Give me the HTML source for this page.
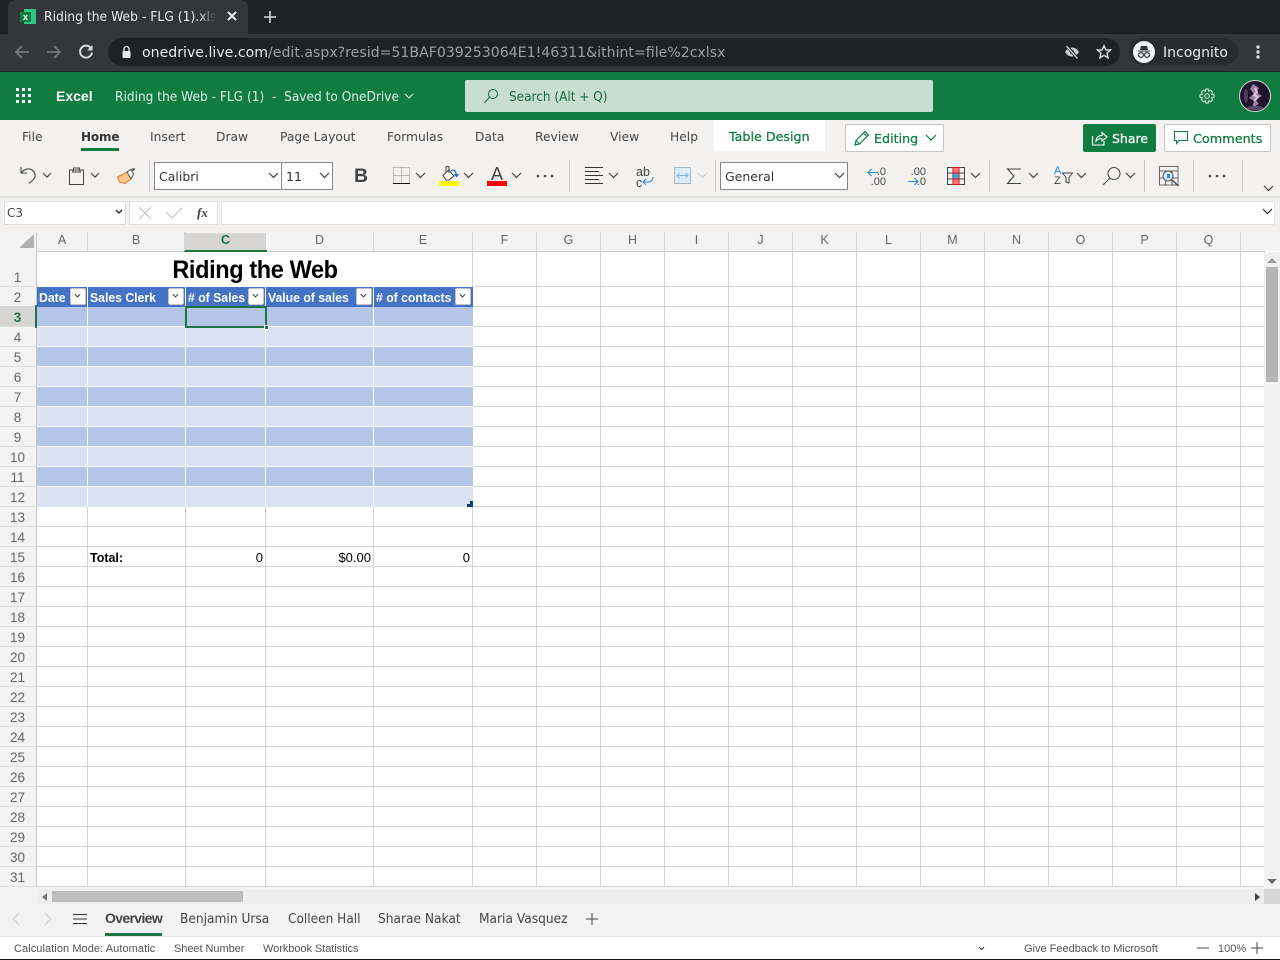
<!DOCTYPE html>
<html><head><meta charset="utf-8"><title>Riding the Web</title>
<style>
html,body{margin:0;padding:0;width:1280px;height:960px;overflow:hidden;background:#fff}
body{position:relative;font-family:"DejaVu Sans","Liberation Sans",sans-serif;font-size:13px;color:#444}
.a,.t,.c,.r,.n,svg{position:absolute}
.a{display:block}
.t{white-space:nowrap;line-height:20px}
.rb{font-size:12.3px;color:#444;top:127px}
.c{top:232px;height:19px;line-height:17px;text-align:center;color:#666;font-size:12.500px;font-family:"Liberation Sans",sans-serif;border-right:1px solid #d4d4d4;box-sizing:border-box}
.r{left:-1px;width:37px;height:20px;line-height:22px;text-align:center;color:#666;font-size:13.500px;padding-top:0;box-sizing:border-box;font-family:"Liberation Sans",sans-serif}
.h{position:absolute;top:289px;color:#fff;font:bold 13px/18px "Liberation Sans",sans-serif;white-space:nowrap;transform-origin:0 50%;transform:scaleX(.94)}
.f{position:absolute;top:288px;width:16px;height:17px;background:#fff;border:1px solid #c4c4c4;box-sizing:border-box;border-radius:2px}
.f:after{content:"";position:absolute;left:4px;top:3px;width:4px;height:4px;border-right:1.5px solid #222;border-bottom:1.5px solid #222;transform:rotate(45deg) scale(.85)}
.ch{fill:none;stroke:#444;stroke-width:1.2}
.v{position:absolute;width:1px;background:#d4d4d4}
.w{position:absolute;width:1px;background:#fff}
.s{-webkit-text-stroke:.25px currentColor}
</style></head><body>
<!-- browser chrome -->
<div class="a" style="left:0;top:0;width:1280px;height:34px;background:#202124"></div>
<div class="a" style="left:8px;top:0;width:240px;height:34px;background:#35363a;border-radius:8px 8px 0 0"></div>
<div class="a" style="left:0;top:34px;width:1280px;height:37px;background:#35363a"></div>
<div class="a" style="left:0;top:71px;width:1280px;height:1px;background:#202124"></div>
<div class="a" style="left:24px;top:9px;width:12px;height:15px;background:#33c481"></div>
<div class="a" style="left:20px;top:12px;width:11px;height:10px;background:#107c41;color:#fff;font:bold 9px/10px 'Liberation Sans',sans-serif;text-align:center">x</div>
<div class="t" style="left:44px;top:7px;width:172px;overflow:hidden;font-size:13px;color:#e8eaed;line-height:21px;-webkit-mask-image:linear-gradient(to right,#000 155px,transparent 172px);mask-image:linear-gradient(to right,#000 155px,transparent 172px)"><span style="display:inline-block;transform-origin:0 50%;transform:scaleX(.95)">Riding the Web - FLG (1).xlsx</span></div>
<svg style="left:226px;top:10px" width="12" height="12"><path d="M2 2L10 10M10 2L2 10" stroke="#e8eaed" stroke-width="2"/></svg>
<svg style="left:263px;top:10px" width="14" height="14"><path d="M7 1V13M1 7H13" stroke="#dadce0" stroke-width="1.6"/></svg>
<svg style="left:13px;top:43px" width="18" height="18"><path d="M16 9H3M9 3L3 9L9 15" fill="none" stroke="#74777b" stroke-width="1.8"/></svg>
<svg style="left:45px;top:43px" width="18" height="18"><path d="M2 9H15M9 3L15 9L9 15" fill="none" stroke="#74777b" stroke-width="1.8"/></svg>
<svg style="left:77px;top:43px" width="18" height="18"><path d="M14 5.2A6 6 0 1 0 15 9.500" fill="none" stroke="#dadce0" stroke-width="1.9"/><path d="M15.500 2V7.500H10Z" fill="#dadce0"/></svg>
<div class="a" style="left:108px;top:38px;width:1012px;height:28px;background:#202124;border-radius:14px"></div>
<svg style="left:121px;top:45px" width="12" height="14"><rect x="1.500" y="6" width="8" height="7" rx="1" fill="#e8eaed"/><path d="M3 6V4a2.500 2.500 0 0 1 5 0V6" fill="none" stroke="#e8eaed" stroke-width="1.300"/></svg>
<div class="t" style="left:142px;top:43px;font-size:14.400px;color:#9aa0a6;font-family:'DejaVu Sans',sans-serif;transform-origin:0 50%;transform:scaleX(.981)"><span style="color:#e8eaed">onedrive.live.com</span>/edit.aspx?resid=51BAF039253064E1!46311&amp;ithint=file%2cxlsx</div>
<svg style="left:1064px;top:44px" width="16" height="16"><path d="M1 8C3 4.500 5.500 3.500 8 3.500S13 4.500 15 8C13 11.500 10.500 12.500 8 12.500S3 11.500 1 8Z" fill="#c4c7c9"/><circle cx="8" cy="8" r="2" fill="#202124"/><path d="M3 2L13 14" stroke="#202124" stroke-width="3"/><path d="M2.500 2L13.500 14.500" stroke="#c4c7c9" stroke-width="1.400"/></svg>
<svg style="left:1096px;top:44px" width="16" height="16"><path d="M8 1.700L9.900 6H14.500L11 9.100L12.100 13.800L8 11.300L3.900 13.800L5 9.100L1.500 6H6.100Z" fill="none" stroke="#dadce0" stroke-width="1.400"/></svg>
<div class="a" style="left:1129px;top:38px;width:109px;height:27px;background:#2a2b2f;border-radius:14px"></div>
<div class="a" style="left:1133px;top:41px;width:22px;height:22px;background:#f1f3f4;border-radius:50%"></div>
<svg style="left:1135px;top:43px" width="18" height="18"><path d="M6 3H12L13 7H5ZM3 7.500H15V8.500H3Z" fill="#303134"/><circle cx="6" cy="12" r="2.400" fill="none" stroke="#303134" stroke-width="1.200"/><circle cx="12" cy="12" r="2.400" fill="none" stroke="#303134" stroke-width="1.200"/></svg>
<div class="t" style="left:1163px;top:43px;font-size:14px;color:#e8eaed;line-height:21px">Incognito</div>
<svg style="left:1256px;top:45px" width="4" height="15"><circle cx="2" cy="2" r="1.700" fill="#dadce0"/><circle cx="2" cy="7" r="1.700" fill="#dadce0"/><circle cx="2" cy="12" r="1.700" fill="#dadce0"/></svg>
<!-- green bar -->
<div class="a" style="left:0;top:72px;width:1280px;height:48px;background:#107c41"></div>
<svg style="left:16px;top:88px" width="16" height="16" fill="#fff"><rect width="3" height="3" x="0"/><rect width="3" height="3" x="6"/><rect width="3" height="3" x="12"/><rect width="3" height="3" y="6"/><rect width="3" height="3" x="6" y="6"/><rect width="3" height="3" x="12" y="6"/><rect width="3" height="3" y="12"/><rect width="3" height="3" x="6" y="12"/><rect width="3" height="3" x="12" y="12"/></svg>
<div class="t" style="left:56px;top:86px;font-size:14px;font-weight:bold;color:#fff;font-family:'Liberation Sans',sans-serif">Excel</div>
<div class="t" style="left:115px;top:87px;font-size:13px;line-height:21px;color:#dfeee6;transform-origin:0 50%;transform:scaleX(.937)">Riding the Web - FLG (1)&nbsp; -&nbsp; Saved to OneDrive</div>
<svg style="left:404px;top:93px" width="10" height="7"><path d="M1 1L5 5L9 1" fill="none" stroke="#dfeee6"/></svg>
<div class="a" style="left:465px;top:80px;width:468px;height:32px;background:#c7ded0;border-radius:2px"></div>
<svg style="left:483px;top:88px" width="16" height="16"><circle cx="10" cy="6" r="4.500" fill="none" stroke="#1d6a40" stroke-width="1"/><path d="M6.500 9L1.500 15" stroke="#1d6a40" stroke-width="1"/></svg>
<div class="t" style="left:509px;top:87px;font-size:13px;line-height:21px;color:#1b6a3f;transform-origin:0 50%;transform:scaleX(.93)">Search (Alt + Q)</div>
<svg style="left:1199px;top:88px" width="16" height="16"><circle cx="8" cy="8" r="2.300" fill="none" stroke="#e6f1ea"/><path d="M6.800 1H9.200L9.700 3.200L11.600 2.200L13.600 4.200L12.600 6.100L15 6.800V9.200L12.600 9.900L13.600 11.800L11.600 13.800L9.700 12.800L9.200 15H6.800L6.300 12.800L4.400 13.800L2.400 11.800L3.400 9.900L1 9.200V6.800L3.400 6.100L2.400 4.200L4.400 2.200L6.300 3.200Z" fill="none" stroke="#e6f1ea"/></svg>
<svg style="left:1239px;top:80px" width="32" height="32"><circle cx="16" cy="16" r="15.500" fill="#21132c" stroke="#d8d8d8"/><path d="M14 4L20 8L17 12L23 16L16 19L20 24L13 28L15 21L10 18L15 14L11 9Z" fill="#9d7fab"/><path d="M16 8L18 12L15 15L19 17L15 21" fill="none" stroke="#d9c6de" stroke-width="2"/><ellipse cx="7" cy="16" rx="2" ry="7" fill="#4c3f5c"/><ellipse cx="16" cy="28" rx="8" ry="2" fill="#5c4a60"/></svg>
<!-- ribbon -->
<div class="a" style="left:0;top:120px;width:1280px;height:76px;background:#f3f2f1"></div>
<div class="a" style="left:714px;top:120px;width:111px;height:31px;background:#fff"></div>
<div class="t rb" style="left:22px">File</div>
<div class="t rb" style="left:81px;font-weight:bold;color:#333;font-size:12px;letter-spacing:-.15px">Home</div>
<div class="a" style="left:81px;top:148px;width:38px;height:3px;background:#107c41"></div>
<div class="t rb" style="left:150px">Insert</div>
<div class="t rb" style="left:216px">Draw</div>
<div class="t rb" style="left:280px">Page Layout</div>
<div class="t rb" style="left:387px">Formulas</div>
<div class="t rb" style="left:475px">Data</div>
<div class="t rb" style="left:535px">Review</div>
<div class="t rb" style="left:610px">View</div>
<div class="t rb" style="left:670px">Help</div>
<div class="t rb s" style="left:729px;color:#107c41;font-size:12.700px">Table Design</div>
<!-- editing / share / comments -->
<div class="a" style="left:845px;top:124px;width:99px;height:28px;background:#fff;border:1px solid #c8c6c4;box-sizing:border-box;border-radius:2px"></div>
<svg style="left:853px;top:130px" width="18" height="17"><path d="M2 15L3 10.500L12 1.500L15.500 5L6.500 14ZM3 10.500L6.500 14M10.500 3L14 6.500" fill="none" stroke="#107c41" stroke-width="1.200"/></svg>
<div class="t s" style="left:874px;top:128px;line-height:21px;font-size:12.700px;color:#107c41">Editing</div>
<svg style="left:925px;top:134px" width="12" height="8"><path d="M1 1L6 6L11 1" fill="none" stroke="#107c41" stroke-width="1.200"/></svg>
<div class="a" style="left:1083px;top:124px;width:73px;height:28px;background:#107c41;border-radius:2px"></div>
<svg style="left:1091px;top:130px" width="18" height="16"><path d="M1.500 6V15H13V11M5 11C5.500 7 8 5.500 11 5.500V2.500L16 7L11 11V8.500C8.500 8.500 6.500 9 5 11Z" fill="none" stroke="#fff" stroke-width="1.100"/></svg>
<div class="t s" style="left:1112px;top:128px;line-height:21px;font-size:12.500px;color:#fff">Share</div>
<div class="a" style="left:1164px;top:124px;width:107px;height:28px;background:#fff;border:1px solid #c8c6c4;box-sizing:border-box;border-radius:2px"></div>
<svg style="left:1173px;top:130px" width="16" height="15"><path d="M1.500 1.500H14.500V10.500H6L3.500 13.500V10.500H1.500Z" fill="none" stroke="#107c41" stroke-width="1.100"/></svg>
<div class="t s" style="left:1193px;top:129px;line-height:21px;font-size:12.800px;color:#107c41">Comments</div>
<!-- toolbar -->
<svg style="left:19px;top:166px" width="20" height="20"><path d="M2 1V7H8M2 7C6 2.500 10 2 13 4C17 7 17 11 14 14L10 17.500" fill="none" stroke="#444" stroke-width="1.100"/></svg>
<svg class="ch" style="left:42px;top:172px" width="10" height="7"><path d="M1 1L5 5L9 1"/></svg>
<svg style="left:69px;top:167px" width="16" height="19"><path d="M.5 3H14.500V17.500H.5Z M4.500 3V1H10.500V3L11.500 5H3.500Z" fill="#f3f2f1" stroke="#444" stroke-width="1"/></svg>
<svg class="ch" style="left:90px;top:172px" width="10" height="7"><path d="M1 1L5 5L9 1"/></svg>
<svg style="left:117px;top:168px" width="19" height="17"><path d="M.5 9L10 4L14 11L8 15.500L2.500 14Z" fill="#fbc98e" stroke="#e8791e"/><path d="M10 4L14 1.500L16.500 6L14 11Z" fill="#fff" stroke="#555"/><path d="M14.500 2.500L17.500 .5" stroke="#555" stroke-width="2"/></svg>
<div class="a" style="left:149px;top:160px;width:1px;height:32px;background:#c8c6c4"></div>
<div class="a" style="left:154px;top:162px;width:128px;height:28px;background:#fff;border:1px solid #8a8886;box-sizing:border-box"></div>
<div class="a" style="left:281px;top:162px;width:52px;height:28px;background:#fff;border:1px solid #8a8886;box-sizing:border-box"></div>
<div class="t" style="left:159px;top:166px;font-size:12.500px;line-height:21px;color:#333">Calibri</div>
<div class="t" style="left:286px;top:166px;font-size:12.500px;line-height:21px;color:#333">11</div>
<svg class="ch" style="left:268px;top:172px" width="11" height="7"><path d="M1 1L5.500 5.500L10 1"/></svg>
<svg class="ch" style="left:319px;top:172px" width="11" height="7"><path d="M1 1L5.500 5.500L10 1"/></svg>
<div class="t" style="left:354px;top:166px;font:bold 19.500px/20px 'Liberation Sans',sans-serif;color:#444">B</div>
<svg style="left:393px;top:167px" width="17" height="17"><path d="M.5 .5H16.500M.5 .5V16M16.500 .5V16M.5 8.500H16.500M8.500 .5V16" fill="none" stroke="#888" stroke-dasharray="1 1"/><path d="M0 16.500H17" stroke="#111" stroke-width="1"/></svg>
<svg class="ch" style="left:415px;top:172px" width="11" height="7"><path d="M1 1L5.500 5.500L10 1"/></svg>
<svg style="left:440px;top:165px" width="20" height="20"><path d="M3 10.500L8.500 5L14 11L9 15H6Z" fill="#fff" stroke="#444"/><path d="M6 7V2.500C6 1 9 1 9 2.500V8" fill="none" stroke="#444"/><path d="M11 6C14 3.500 16 6 16.500 11M14.500 9L16.500 11.500L18.500 9" fill="none" stroke="#1b6fc2" stroke-width="1.300"/></svg>
<div class="a" style="left:439px;top:181px;width:20px;height:5px;background:#ff0"></div>
<svg class="ch" style="left:463px;top:172px" width="11" height="7"><path d="M1 1L5.500 5.500L10 1"/></svg>
<div class="t" style="left:491px;top:164px;font-size:18px;color:#444;font-family:'Liberation Sans',sans-serif">A</div>
<div class="a" style="left:487px;top:181px;width:20px;height:5px;background:#f00"></div>
<svg class="ch" style="left:511px;top:172px" width="11" height="7"><path d="M1 1L5.500 5.500L10 1"/></svg>
<svg style="left:535px;top:173px" width="20" height="6" fill="#444"><circle cx="3" cy="3" r="1.300"/><circle cx="10" cy="3" r="1.300"/><circle cx="17" cy="3" r="1.300"/></svg>
<div class="a" style="left:569px;top:160px;width:1px;height:32px;background:#c8c6c4"></div>
<svg style="left:585px;top:167px" width="18" height="18"><path d="M0 .5H18M0 4.500H14M0 8.500H18M0 12.500H14M0 16.500H18" stroke="#333" stroke-width="1"/></svg>
<svg class="ch" style="left:608px;top:172px" width="11" height="7"><path d="M1 1L5.500 5.500L10 1"/></svg>
<div class="t" style="left:636px;top:167px;font:12.500px/11px 'Liberation Sans',sans-serif;color:#444">ab<br>c</div>
<svg style="left:642px;top:176px" width="12" height="10"><path d="M11 1C11 4 9 6 6 6H1M4 3L1 6L4 9" fill="none" stroke="#2b88d8" stroke-width="1.100"/></svg>
<svg style="left:674px;top:167px" width="18" height="18"><rect x=".5" y=".5" width="16" height="16" fill="#deecf9" stroke="#a6b8c6"/><path d="M3 8.500H14M5.500 6L3 8.500L5.500 11M11.500 6L14 8.500L11.500 11" fill="none" stroke="#7fb3dc" stroke-width="1"/></svg>
<svg class="ch" style="left:697px;top:172px;stroke:#d0d0d0" width="11" height="7"><path d="M1 1L5.500 5.500L10 1"/></svg>
<div class="a" style="left:715px;top:160px;width:1px;height:32px;background:#c8c6c4"></div>
<div class="a" style="left:720px;top:162px;width:128px;height:28px;background:#fff;border:1px solid #8a8886;box-sizing:border-box"></div>
<div class="t" style="left:725px;top:166px;font-size:12.500px;line-height:21px;color:#333">General</div>
<svg class="ch" style="left:834px;top:172px" width="11" height="7"><path d="M1 1L5.500 5.500L10 1"/></svg>
<div class="t" style="left:868px;top:167px;font:11px/10px 'Liberation Sans',sans-serif;color:#444;text-align:right;width:18px">.0<br>.00</div>
<svg style="left:867px;top:168px" width="12" height="9"><path d="M11 4.500H1M4.500 1L1 4.500L4.500 8" fill="none" stroke="#2b88d8" stroke-width="1.100"/></svg>
<div class="t" style="left:908px;top:167px;font:11px/10px 'Liberation Sans',sans-serif;color:#444;text-align:right;width:18px">.00<br>.0</div>
<svg style="left:907px;top:177px" width="12" height="9"><path d="M1 4.500H11M7.500 1L11 4.500L7.500 8" fill="none" stroke="#2b88d8" stroke-width="1.100"/></svg>
<svg style="left:947px;top:167px" width="18" height="18"><rect x="6" y="1" width="6" height="5" fill="#f4797c"/><rect x="6" y="6" width="6" height="6" fill="#50a5e0"/><rect x="6" y="12" width="6" height="5" fill="#f4797c"/><path d="M.5 .5H17.500V17.500H.5ZM.5 6H17.500M.5 12H17.500M6 .5V17.500M12 .5V17.500" fill="none" stroke="#444"/><path d="M6 .5H12V6H6ZM6 12H12V17.500H6Z" fill="none" stroke="#e01010"/></svg>
<svg class="ch" style="left:970px;top:172px" width="11" height="7"><path d="M1 1L5.500 5.500L10 1"/></svg>
<div class="a" style="left:989px;top:160px;width:1px;height:32px;background:#c8c6c4"></div>
<svg style="left:1006px;top:167px" width="16" height="18"><path d="M15 2H1.500L8 9L1.500 16.500H15" fill="none" stroke="#444" stroke-width="1.100"/></svg>
<svg class="ch" style="left:1028px;top:172px" width="11" height="7"><path d="M1 1L5.500 5.500L10 1"/></svg>
<div class="t" style="left:1054px;top:166px;font:11px/10px 'Liberation Sans',sans-serif;color:#2b88d8">A<br><span style="color:#444">Z</span></div>
<svg style="left:1062px;top:172px" width="11" height="13"><path d="M.5 1H10.500L7 5.500V11L4 10V5.500Z" fill="none" stroke="#444"/></svg>
<svg class="ch" style="left:1076px;top:172px" width="11" height="7"><path d="M1 1L5.500 5.500L10 1"/></svg>
<svg style="left:1102px;top:166px" width="20" height="20"><circle cx="12" cy="7.500" r="6" fill="none" stroke="#444"/><path d="M8 12L1 19" stroke="#444"/></svg>
<svg class="ch" style="left:1125px;top:172px" width="11" height="7"><path d="M1 1L5.500 5.500L10 1"/></svg>
<div class="a" style="left:1144px;top:160px;width:1px;height:32px;background:#c8c6c4"></div>
<svg style="left:1159px;top:166px" width="21" height="21"><path d="M.5 .5H19V19H.5ZM.5 5H19M.5 12H19M6.500 5V19M13 5V19" fill="none" stroke="#666"/><circle cx="9" cy="10" r="5" fill="#dce6ee" stroke="#555"/><rect x="8" y="8" width="3" height="4" fill="#2b88d8"/><path d="M13 14L19.500 20" stroke="#444" stroke-width="1.300"/></svg>
<div class="a" style="left:1193px;top:160px;width:1px;height:32px;background:#c8c6c4"></div>
<svg style="left:1207px;top:173px" width="20" height="6" fill="#444"><circle cx="3" cy="3" r="1.300"/><circle cx="10" cy="3" r="1.300"/><circle cx="17" cy="3" r="1.300"/></svg>
<div class="a" style="left:1242px;top:160px;width:1px;height:32px;background:#c8c6c4"></div>
<svg class="ch" style="left:1263px;top:185px" width="11" height="7"><path d="M1 1L5.500 5.500L10 1"/></svg>
<!-- formula bar -->
<div class="a" style="left:0;top:196px;width:1280px;height:36px;background:#f3f2f1;box-shadow:inset 0 3px 3px -2px #ccc"></div>
<div class="a" style="left:4px;top:201px;width:122px;height:24px;background:#fff;border:1px solid #e1dfdd;box-sizing:border-box"></div>
<div class="t" style="left:7px;top:203px;font-size:12px;color:#444">C3</div>
<svg class="ch" style="left:115px;top:209px;stroke-width:1.500;stroke:#333" width="9" height="6"><path d="M1 1L4 4L7 1"/></svg>
<div class="a" style="left:129px;top:201px;width:89px;height:24px;background:#fff;border:1px solid #e1dfdd;box-sizing:border-box"></div>
<svg style="left:138px;top:206px" width="14" height="14"><path d="M1 1L13 13M13 1L1 13" stroke="#c0bebc"/></svg>
<svg style="left:165px;top:206px" width="18" height="14"><path d="M1 6L7 12L17 2" fill="none" stroke="#c0bebc"/></svg>
<div class="t" style="left:197px;top:203px;font:italic bold 13px/20px 'Liberation Serif',serif;color:#444">fx</div>
<div class="a" style="left:221px;top:201px;width:1054px;height:24px;background:#fff;border:1px solid #e8e6e4;box-sizing:border-box"></div>
<svg class="ch" style="left:1262px;top:208px;stroke:#333" width="11" height="7"><path d="M1 1L5.500 5.500L10 1"/></svg>
<!-- headers -->
<div class="a" style="left:0;top:232px;width:1280px;height:19px;background:#f3f3f3"></div>
<div class="a" style="left:0;top:287px;width:37px;height:600px;background:repeating-linear-gradient(to bottom,#f3f3f3 0,#f3f3f3 19px,#dedede 19px,#dedede 20px)"></div>
<div class="a" style="left:0;top:251px;width:37px;height:36px;background:#f3f3f3;border-bottom:1px solid #dedede;box-sizing:border-box"></div>
<div class="a" style="left:36px;top:233px;width:1px;height:654px;background:#c8c8c8"></div>
<div class="a" style="left:37px;top:251px;width:1228px;height:1px;background:#c8c8c8"></div>
<svg style="left:18px;top:234px" width="17" height="15"><path d="M16 0V14H1Z" fill="#b1b1b1"/></svg>
<div class="a" style="left:185px;top:233px;width:81px;height:18px;background:#d6d5d3"></div>
<div class="a" style="left:184px;top:250px;width:83px;height:2px;background:#217346"></div>
<div class="c" style="left:37px;width:51px">A</div>
<div class="c" style="left:88px;width:97px">B</div>
<div class="c" style="left:185px;width:81px;color:#217346;font-weight:bold;border:0">C</div>
<div class="c" style="left:266px;width:108px">D</div>
<div class="c" style="left:374px;width:99px">E</div>
<div class="c" style="left:473px;width:64px">F</div>
<div class="c" style="left:537px;width:64px">G</div>
<div class="c" style="left:601px;width:64px">H</div>
<div class="c" style="left:665px;width:64px">I</div>
<div class="c" style="left:729px;width:64px">J</div>
<div class="c" style="left:793px;width:64px">K</div>
<div class="c" style="left:857px;width:64px">L</div>
<div class="c" style="left:921px;width:64px">M</div>
<div class="c" style="left:985px;width:64px">N</div>
<div class="c" style="left:1049px;width:64px">O</div>
<div class="c" style="left:1113px;width:64px">P</div>
<div class="c" style="left:1177px;width:64px">Q</div>
<!-- grid -->
<div class="a" style="left:37px;top:287px;width:1228px;height:600px;background:repeating-linear-gradient(to bottom,#fff 0,#fff 19px,#d4d4d4 19px,#d4d4d4 20px)"></div>
<div class="a" style="left:37px;top:252px;width:1228px;height:34px;background:#fff"></div>
<div class="a" style="left:473px;top:286px;width:792px;height:1px;background:#d4d4d4"></div>
<div class="v" style="left:87px;top:507px;height:380px"></div>
<div class="v" style="left:185px;top:507px;height:380px"></div>
<div class="v" style="left:265px;top:507px;height:380px"></div>
<div class="v" style="left:373px;top:507px;height:380px"></div>
<div class="v" style="left:472px;top:252px;height:635px"></div>
<div class="v" style="left:536px;top:252px;height:635px"></div>
<div class="v" style="left:600px;top:252px;height:635px"></div>
<div class="v" style="left:664px;top:252px;height:635px"></div>
<div class="v" style="left:728px;top:252px;height:635px"></div>
<div class="v" style="left:792px;top:252px;height:635px"></div>
<div class="v" style="left:856px;top:252px;height:635px"></div>
<div class="v" style="left:920px;top:252px;height:635px"></div>
<div class="v" style="left:984px;top:252px;height:635px"></div>
<div class="v" style="left:1048px;top:252px;height:635px"></div>
<div class="v" style="left:1112px;top:252px;height:635px"></div>
<div class="v" style="left:1176px;top:252px;height:635px"></div>
<div class="v" style="left:1240px;top:252px;height:635px"></div>
<!-- table -->
<div class="a" style="left:37px;top:287px;width:436px;height:20px;background:#4472c4"></div>
<div class="a" style="left:37px;top:307px;width:436px;height:200px;background:repeating-linear-gradient(to bottom,#b4c6e7 0,#b4c6e7 19px,#fff 19px,#fff 20px,#d9e1f2 20px,#d9e1f2 39px,#fff 39px,#fff 40px)"></div>
<div class="a" style="left:37px;top:506px;width:436px;height:1px;background:#d9e1f2"></div>
<div class="w" style="left:87px;top:287px;height:220px"></div>
<div class="w" style="left:185px;top:287px;height:220px"></div>
<div class="w" style="left:265px;top:287px;height:220px"></div>
<div class="w" style="left:373px;top:287px;height:220px"></div>
<div class="a" style="left:467px;top:501px;width:6px;height:6px;background:#0c3f6c;clip-path:polygon(50% 0,100% 0,100% 100%,0 100%,0 50%,50% 50%)"></div>
<div class="t" style="left:37px;top:256px;width:436px;text-align:center;font:bold 25px/28px 'Liberation Sans',sans-serif;color:#000;letter-spacing:-.4px;transform:scaleX(.94)">Riding the Web</div>
<div class="h" style="left:39px">Date</div><div class="f" style="left:70px"></div>
<div class="h" style="left:90px">Sales Clerk</div><div class="f" style="left:168px"></div>
<div class="h" style="left:188px"># of Sales</div><div class="f" style="left:248px"></div>
<div class="h" style="left:268px">Value of sales</div><div class="f" style="left:356px"></div>
<div class="h" style="left:376px"># of contacts</div><div class="f" style="left:455px"></div>
<div class="a" style="left:185px;top:306px;width:82px;height:22px;border:2px solid #217346;box-sizing:border-box"></div>
<div class="a" style="left:264px;top:325px;background:#217346;border:1px solid #fff;box-sizing:content-box;width:3px;height:3px"></div>
<div class="a" style="left:0;top:306px;width:36px;height:20px;background:#d6d5d3"></div>
<div class="a" style="left:35px;top:305px;width:2px;height:23px;background:#217346"></div>
<div class="t" style="left:90px;top:548px;font:bold 13px/20px 'Liberation Sans',sans-serif;color:#000;transform-origin:0 50%;transform:scaleX(.96)">Total:</div>
<div class="t" style="left:186px;top:548px;width:77px;text-align:right;font:13px/20px 'Liberation Sans',sans-serif;color:#000">0</div>
<div class="t" style="left:266px;top:548px;width:105px;text-align:right;font:13px/20px 'Liberation Sans',sans-serif;color:#000">$0.00</div>
<div class="t" style="left:374px;top:548px;width:96px;text-align:right;font:13px/20px 'Liberation Sans',sans-serif;color:#000">0</div>
<!-- row headers -->
<div class="r" style="top:267px">1</div><div class="r" style="top:287px">2</div>
<div class="r" style="top:307px;color:#217346;font-weight:bold">3</div><div class="r" style="top:327px">4</div>
<div class="r" style="top:347px">5</div><div class="r" style="top:367px">6</div>
<div class="r" style="top:387px">7</div><div class="r" style="top:407px">8</div>
<div class="r" style="top:427px">9</div><div class="r" style="top:447px">10</div>
<div class="r" style="top:467px">11</div><div class="r" style="top:487px">12</div>
<div class="r" style="top:507px">13</div><div class="r" style="top:527px">14</div>
<div class="r" style="top:547px">15</div><div class="r" style="top:567px">16</div>
<div class="r" style="top:587px">17</div><div class="r" style="top:607px">18</div>
<div class="r" style="top:627px">19</div><div class="r" style="top:647px">20</div>
<div class="r" style="top:667px">21</div><div class="r" style="top:687px">22</div>
<div class="r" style="top:707px">23</div><div class="r" style="top:727px">24</div>
<div class="r" style="top:747px">25</div><div class="r" style="top:767px">26</div>
<div class="r" style="top:787px">27</div><div class="r" style="top:807px">28</div>
<div class="r" style="top:827px">29</div><div class="r" style="top:847px">30</div>
<div class="r" style="top:867px">31</div>
<!-- scrollbars -->
<div class="a" style="left:1264px;top:252px;width:16px;height:636px;background:#f1f1f1"></div>
<div class="a" style="left:1266px;top:267px;width:12px;height:115px;background:#b5b5b5"></div>
<svg style="left:1267px;top:258px" width="10" height="6"><path d="M0 5L5 0L10 5Z" fill="#9b9b9b"/></svg>
<svg style="left:1267px;top:879px" width="10" height="5"><path d="M0 0L5 5L10 0Z" fill="#666"/></svg>
<div class="a" style="left:0;top:887px;width:1280px;height:49px;background:#f3f3f3"></div>
<div class="a" style="left:37px;top:889px;width:1227px;height:15px;background:#eee"></div>
<div class="a" style="left:1264px;top:889px;width:16px;height:15px;background:#d6d6d6"></div>
<div class="a" style="left:52px;top:891px;width:191px;height:11px;background:#bdbdbd"></div>
<svg style="left:42px;top:893px" width="5" height="8"><path d="M5 0L0 4L5 8Z" fill="#777"/></svg>
<svg style="left:1255px;top:893px" width="5" height="8"><path d="M0 0L5 4L0 8Z" fill="#444"/></svg>
<!-- sheet tabs -->
<svg style="left:11px;top:912px" width="10" height="14"><path d="M8 1L2 7L8 13" fill="none" stroke="#ccc"/></svg>
<svg style="left:43px;top:912px" width="10" height="14"><path d="M2 1L8 7L2 13" fill="none" stroke="#ccc"/></svg>
<svg style="left:73px;top:913px" width="14" height="12"><path d="M0 1.500H14M0 6H14M0 10.500H14" stroke="#333"/></svg>
<div class="t" style="left:105px;top:908px;font-size:14px;font-weight:bold;color:#444;letter-spacing:-.65px;font-family:'Liberation Sans',sans-serif;line-height:21px">Overview</div>
<div class="a" style="left:105px;top:933px;width:57px;height:3px;background:#217346"></div>
<div class="t" style="left:180px;top:909px;font-size:13.500px;line-height:21px;color:#444;transform-origin:0 50%;transform:scaleX(.905)">Benjamin Ursa</div>
<div class="t" style="left:288px;top:909px;font-size:13.500px;line-height:21px;color:#444;transform-origin:0 50%;transform:scaleX(.9)">Colleen Hall</div>
<div class="t" style="left:378px;top:909px;font-size:13.500px;line-height:21px;color:#444;transform-origin:0 50%;transform:scaleX(.905)">Sharae Nakat</div>
<div class="t" style="left:479px;top:909px;font-size:13.500px;line-height:21px;color:#444;transform-origin:0 50%;transform:scaleX(.905)">Maria Vasquez</div>
<svg style="left:586px;top:913px" width="12" height="12"><path d="M6 0V12M0 6H12" stroke="#444"/></svg>
<!-- status -->
<div class="a" style="left:0;top:936px;width:1280px;height:1px;background:#e1e1e1"></div>
<div class="a" style="left:0;top:937px;width:1280px;height:22px;background:#fff"></div>
<div class="a" style="left:0;top:959px;width:1280px;height:1px;background:#111"></div>
<div class="t" style="left:14px;top:939px;font:11px/20px 'Liberation Sans',sans-serif;color:#555;letter-spacing:.07px">Calculation Mode: Automatic</div>
<div class="t" style="left:174px;top:939px;font:11px/20px 'Liberation Sans',sans-serif;color:#555;letter-spacing:-.05px">Sheet Number</div>
<div class="t" style="left:263px;top:939px;font:11px/20px 'Liberation Sans',sans-serif;color:#555;letter-spacing:-.05px">Workbook Statistics</div>
<svg class="ch" style="left:978px;top:946px" width="7" height="5"><path d="M1 1L3.500 3.500L6 1"/></svg>
<div class="t" style="left:1024px;top:939px;font:11px/20px 'Liberation Sans',sans-serif;color:#555">Give Feedback to Microsoft</div>
<svg style="left:1197px;top:942px" width="12" height="12"><path d="M0 6H12" stroke="#444"/></svg>
<div class="t" style="left:1218px;top:939px;font:11px/20px 'Liberation Sans',sans-serif;color:#555">100%</div>
<svg style="left:1251px;top:942px" width="12" height="12"><path d="M6 0V12M0 6H12" stroke="#444"/></svg>
</body></html>
